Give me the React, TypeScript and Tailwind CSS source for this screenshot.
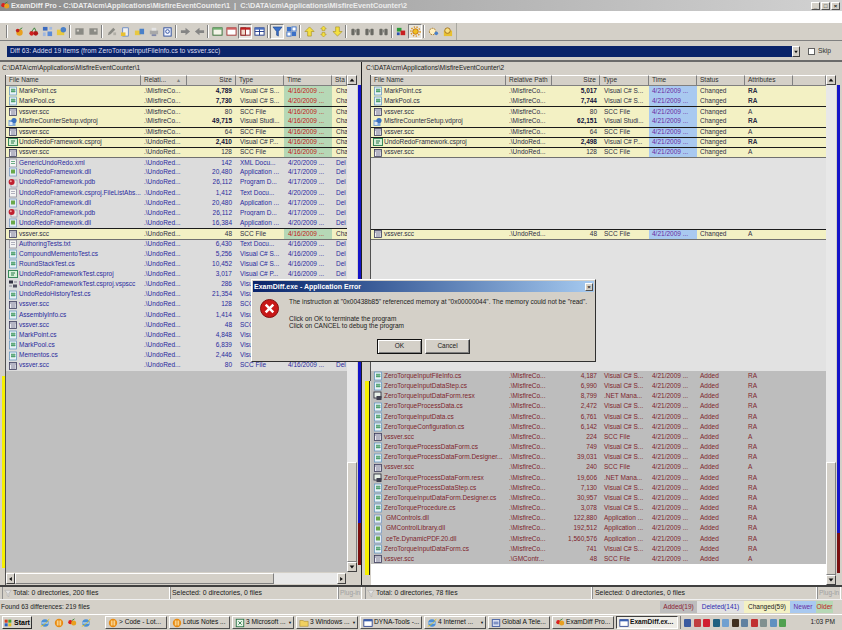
import React from "react"

type Row = {
  name: string
  icon: string
  rel: string
  size: string
  bold?: boolean
  type: string
  time: string
  status: string
  attr?: string
  line?: boolean
  softLine?: boolean
}

const misfire = ".\\MisfireCo..."
const undo = ".\\UndoRed..."
const csType = "Visual C# S..."
const appType = "Application ..."

const leftRows: Row[] = [
  { name: "MarkPoint.cs", icon: "cs", rel: misfire, size: "4,789", bold: true, type: csType, time: "4/16/2009 ...", status: "Cha" },
  { name: "MarkPool.cs", icon: "cs", rel: misfire, size: "7,730", bold: true, type: csType, time: "4/20/2009 ...", status: "Cha" },
  { name: "vssver.scc", icon: "scc", rel: misfire, size: "80", type: "SCC File", time: "4/16/2009 ...", status: "Cha", line: true },
  { name: "MisfireCounterSetup.vdproj", icon: "vd", rel: misfire, size: "49,715", bold: true, type: "Visual Studi...", time: "4/16/2009 ...", status: "Cha" },
  { name: "vssver.scc", icon: "scc", rel: misfire, size: "64", type: "SCC File", time: "4/16/2009 ...", status: "Cha", line: true },
  { name: "UndoRedoFramework.csproj", icon: "proj", rel: undo, size: "2,410", bold: true, type: "Visual C# P...", time: "4/16/2009 ...", status: "Cha", line: true },
  { name: "vssver.scc", icon: "scc", rel: undo, size: "128", type: "SCC File", time: "4/16/2009 ...", status: "Cha", line: true },
  { name: "GenericUndoRedo.xml", icon: "xml", rel: undo, size: "142", type: "XML Docu...", time: "4/20/2009 ...", status: "Del", softLine: true },
  { name: "UndoRedoFramework.dll", icon: "dll", rel: undo, size: "20,480", type: appType, time: "4/17/2009 ...", status: "Del" },
  { name: "UndoRedoFramework.pdb", icon: "pdb", rel: undo, size: "26,112", type: "Program D...", time: "4/17/2009 ...", status: "Del" },
  { name: "UndoRedoFramework.csproj.FileListAbs...", icon: "txt", rel: undo, size: "1,412", type: "Text Docu...", time: "4/20/2009 ...", status: "Del" },
  { name: "UndoRedoFramework.dll", icon: "dll", rel: undo, size: "20,480", type: appType, time: "4/17/2009 ...", status: "Del" },
  { name: "UndoRedoFramework.pdb", icon: "pdb", rel: undo, size: "26,112", type: "Program D...", time: "4/17/2009 ...", status: "Del" },
  { name: "UndoRedoFramework.dll", icon: "dll", rel: undo, size: "16,384", type: appType, time: "4/20/2009 ...", status: "Del" },
  { name: "vssver.scc", icon: "scc", rel: undo, size: "48", type: "SCC File", time: "4/16/2009 ...", status: "Cha", line: true },
  { name: "AuthoringTests.txt", icon: "txt", rel: undo, size: "6,430", type: "Text Docu...", time: "4/16/2009 ...", status: "Del", softLine: true },
  { name: "CompoundMementoTest.cs", icon: "cs", rel: undo, size: "5,256", type: csType, time: "4/16/2009 ...", status: "Del" },
  { name: "RoundStackTest.cs", icon: "cs", rel: undo, size: "10,452", type: csType, time: "4/16/2009 ...", status: "Del" },
  { name: "UndoRedoFrameworkTest.csproj", icon: "proj", rel: undo, size: "3,017", type: "Visual C# P...", time: "4/16/2009 ...", status: "Del" },
  { name: "UndoRedoFrameworkTest.csproj.vspscc", icon: "vsp", rel: undo, size: "286", type: "Visual Studi...", time: "4/16/2009 ...", status: "Del" },
  { name: "UndoRedoHistoryTest.cs", icon: "cs", rel: undo, size: "21,354", type: csType, time: "4/16/2009 ...", status: "Del" },
  { name: "vssver.scc", icon: "scc", rel: undo, size: "128", type: "SCC File", time: "4/16/2009 ...", status: "Del" },
  { name: "AssemblyInfo.cs", icon: "cs", rel: undo, size: "1,414", type: csType, time: "4/16/2009 ...", status: "Del" },
  { name: "vssver.scc", icon: "scc", rel: undo, size: "48", type: "SCC File", time: "4/16/2009 ...", status: "Del" },
  { name: "MarkPoint.cs", icon: "cs", rel: undo, size: "4,848", type: csType, time: "4/16/2009 ...", status: "Del" },
  { name: "MarkPool.cs", icon: "cs", rel: undo, size: "6,839", type: csType, time: "4/16/2009 ...", status: "Del" },
  { name: "Mementos.cs", icon: "cs", rel: undo, size: "2,446", type: csType, time: "4/16/2009 ...", status: "Del" },
  { name: "vssver.scc", icon: "scc", rel: undo, size: "80", type: "SCC File", time: "4/16/2009 ...", status: "Del" },
]

const changedTime = "4/21/2009 ..."
const rightChanged: Row[] = [
  { name: "MarkPoint.cs", icon: "cs", rel: misfire, size: "5,017", bold: true, type: csType, time: changedTime, status: "Changed", attr: "RA" },
  { name: "MarkPool.cs", icon: "cs", rel: misfire, size: "7,744", bold: true, type: csType, time: changedTime, status: "Changed", attr: "RA" },
  { name: "vssver.scc", icon: "scc", rel: misfire, size: "80", type: "SCC File", time: changedTime, status: "Changed", attr: "A", line: true },
  { name: "MisfireCounterSetup.vdproj", icon: "vd", rel: misfire, size: "62,151", bold: true, type: "Visual Studi...", time: changedTime, status: "Changed", attr: "RA" },
  { name: "vssver.scc", icon: "scc", rel: misfire, size: "64", type: "SCC File", time: changedTime, status: "Changed", attr: "A", line: true },
  { name: "UndoRedoFramework.csproj", icon: "proj", rel: undo, size: "2,498", bold: true, type: "Visual C# P...", time: changedTime, status: "Changed", attr: "RA", line: true },
  { name: "vssver.scc", icon: "scc", rel: undo, size: "128", type: "SCC File", time: changedTime, status: "Changed", attr: "A", line: true },
]

const rightLone: Row = { name: "vssver.scc", icon: "scc", rel: undo, size: "48", type: "SCC File", time: changedTime, status: "Changed", attr: "A", line: true }

const added = (name: string, icon: string, size: string, type: string, attr = "RA", rel = misfire): Row => ({
  name, icon, rel, size, type, time: changedTime, status: "Added", attr,
})

const rightAdded: Row[] = [
  added("ZeroTorqueInputFileInfo.cs", "cs", "4,187", csType),
  added("ZeroTorqueInputDataStep.cs", "cs", "6,990", csType),
  added("ZeroTorqueInputDataForm.resx", "resx", "8,799", ".NET Mana..."),
  added("ZeroTorqueProcessData.cs", "cs", "2,472", csType),
  added("ZeroTorqueInputData.cs", "cs", "6,761", csType),
  added("ZeroTorqueConfiguration.cs", "cs", "6,142", csType),
  added("vssver.scc", "scc", "224", "SCC File", "A"),
  added("ZeroTorqueProcessDataForm.cs", "cs", "749", csType),
  added("ZeroTorqueProcessDataForm.Designer...", "cs", "39,031", csType),
  added("vssver.scc", "scc", "240", "SCC File", "A"),
  added("ZeroTorqueProcessDataForm.resx", "resx", "19,606", ".NET Mana..."),
  added("ZeroTorqueProcessDataStep.cs", "cs", "7,130", csType),
  added("ZeroTorqueInputDataForm.Designer.cs", "cs", "30,957", csType),
  added("ZeroTorqueProcedure.cs", "cs", "3,078", csType),
  added("GMControls.dll", "dll", "122,880", appType),
  added("GMControlLibrary.dll", "dll", "192,512", appType),
  added("ceTe.DynamicPDF.20.dll", "dll", "1,560,576", appType),
  added("ZeroTorqueInputDataForm.cs", "cs", "741", csType),
  added("vssver.scc", "scc", "48", "SCC File", "A", ".\\GMContr..."),
]

function FileIcon({ kind }: { kind: string }) {
  const box = "w-[10px] h-[10px] shrink-0"
  if (kind === "scc")
    return (
      <svg viewBox="0 0 10 10" className={box}>
        <rect x="1.5" y="1.5" width="7" height="7" fill="#eeeef4" stroke="#3a3a5a" strokeWidth=".8" />
        <path d="M1.5 3h7M3 5h4.5M3 7h4.5" stroke="#4a4a6a" strokeWidth=".7" />
      </svg>
    )
  if (kind === "pdb")
    return (
      <svg viewBox="0 0 10 10" className={box}>
        <rect x="3" y="2" width="6" height="7" fill="#e8e8e8" stroke="#8888a0" strokeWidth=".6" />
        <circle cx="3.6" cy="4" r="3" fill="#c02030" />
        <circle cx="2.8" cy="3.2" r="1" fill="#f0a0a0" />
      </svg>
    )
  if (kind === "txt" || kind === "xml")
    return (
      <svg viewBox="0 0 10 10" className={box}>
        <rect x="1.5" y="1" width="7" height="8" fill="#f4f4f4" stroke="#8a8a9a" strokeWidth=".8" />
        <path d="M3 3.5h4M3 5.5h4" stroke={kind === "xml" ? "#4a9a6a" : "#a0a0b0"} strokeWidth=".8" />
      </svg>
    )
  if (kind === "vd")
    return (
      <svg viewBox="0 0 10 10" className={box}>
        <rect x="0.5" y="3" width="7" height="6" fill="#7fa8d8" />
        <circle cx="6" cy="3.5" r="2.6" fill="#3a70c0" />
        <rect x="1.5" y="5" width="3" height="3" fill="#e0e8f4" />
      </svg>
    )
  if (kind === "vsp")
    return (
      <svg viewBox="0 0 10 10" className={box}>
        <rect x="1" y="1.5" width="4" height="3" fill="#303040" />
        <rect x="5" y="5.5" width="4" height="3" fill="#505060" />
        <path d="M1 7h3M6 3h3" stroke="#808090" />
      </svg>
    )
  if (kind === "proj")
    return (
      <svg viewBox="0 0 10 10" className={box}>
        <rect x="0.5" y="1.5" width="9" height="7" fill="#d8f0d8" stroke="#3a8a5a" />
        <path d="M3 4h4M3 6h3" stroke="#2a7a4a" />
      </svg>
    )
  if (kind === "resx")
    return (
      <svg viewBox="0 0 10 10" className={box}>
        <rect x="1" y="1" width="7" height="6" fill="#e8f0e8" stroke="#202030" strokeWidth=".8" />
        <rect x="3.5" y="5" width="5" height="4" fill="#404050" />
      </svg>
    )
  if (kind === "dll")
    return (
      <svg viewBox="0 0 10 10" className={box}>
        <rect x="1.5" y="1" width="7" height="8" fill="#e4eef8" stroke="#7a9ac0" strokeWidth=".8" />
        <rect x="3" y="2.5" width="4" height="4" fill="#6aa84a" />
      </svg>
    )
  return (
    <svg viewBox="0 0 10 10" className={box}>
      <rect x="1.5" y="1" width="7" height="8" fill="#e8f2f8" stroke="#6a9ac0" strokeWidth=".8" />
      <path d="M4 2.5v4M6 2.5v4M3 3.8h4.5M3 5.4h4.5" stroke="#2f8f4f" strokeWidth=".8" />
    </svg>
  )
}

function Cell({ className, children }: { className: string; children?: React.ReactNode }) {
  return <div className={`shrink-0 overflow-hidden whitespace-nowrap ${className}`}>{children}</div>
}

function LeftRow({ r }: { r: Row }) {
  const changed = r.status === "Cha"
  const tone = changed ? "bg-[#f3f1c4] text-[#2e2e44]" : "bg-[#dcdcdc] text-[#2a2a9c]"
  const border = r.line ? "border-t border-[#1a1a1a]" : r.softLine ? "border-t border-[#707070]" : ""
  return (
    <div className={`flex items-center h-[10.185px] box-border ${tone} ${border}`}>
      <Cell className="w-[135px] flex items-center gap-[1px] pl-[2px]">
        <FileIcon kind={r.icon} />
        <span>{r.name}</span>
      </Cell>
      <Cell className="w-[46px] pl-[3px]">{r.rel}</Cell>
      <Cell className={`w-[49px] text-right pr-[4px] ${r.bold ? "font-bold text-[#10103a]" : ""}`}>{r.size}</Cell>
      <Cell className="w-[48px] pl-[4px]">{r.type}</Cell>
      <Cell className={`w-[48px] h-full pl-[4px] flex items-center ${changed ? "bg-[#b6d8b6] text-[#c02020]" : ""}`}>{r.time}</Cell>
      <Cell className="w-[15px] pl-[4px]">{r.status}</Cell>
    </div>
  )
}

function RightRow({ r }: { r: Row }) {
  const isAdded = r.status === "Added"
  const tone = isAdded ? "bg-[#bdbdbd] text-[#7d1f2c]" : "bg-[#f3f1c4] text-[#2e2e44]"
  return (
    <div className={`flex items-center h-[10.185px] box-border ${tone} ${r.line ? "border-t border-[#1a1a1a]" : ""}`}>
      <Cell className="w-[135px] flex items-center gap-[1px] pl-[2px]">
        <FileIcon kind={r.icon} />
        <span className={r.icon === "dll" ? "pl-[2px]" : ""}>{r.name}</span>
      </Cell>
      <Cell className="w-[46px] pl-[3px]">{r.rel}</Cell>
      <Cell className={`w-[48px] text-right pr-[3px] ${r.bold ? "font-bold text-[#10103a]" : ""}`}>{r.size}</Cell>
      <Cell className="w-[49px] pl-[4px]">{r.type}</Cell>
      <Cell className={`w-[48px] h-full pl-[3px] flex items-center ${isAdded ? "" : "bg-[#a9c9f0] text-[#6a2aa0]"}`}>{r.time}</Cell>
      <Cell className="w-[48px] pl-[3px]">{r.status}</Cell>
      <Cell className={`w-[48px] pl-[3px] ${r.bold ? "font-bold" : ""}`}>{r.attr}</Cell>
    </div>
  )
}

function HeaderCell({ w, label, align, sort }: { w: string; label?: string; align?: string; sort?: boolean }) {
  return (
    <div className={`${w} h-full shrink-0 flex items-center whitespace-nowrap overflow-hidden px-[3px] bg-[#d4d0c8] border-r border-b border-t border-r-[#808080] border-b-[#808080] border-t-white text-[#303030] ${align ?? ""}`}>
      <span>{label}</span>
      {sort && <span className="ml-[10px] text-[5px] text-[#808080]">▲</span>}
    </div>
  )
}

function Arrow({ dir, className }: { dir: "up" | "down" | "left" | "right"; className?: string }) {
  const pts = { up: "5,3 2,7 8,7", down: "2,3 8,3 5,7", left: "7,2 7,8 3,5", right: "3,2 3,8 7,5" }[dir]
  return (
    <div className={`shrink-0 bg-[#d4d0c8] border border-t-white border-l-white border-r-[#404040] border-b-[#404040] flex items-center justify-center ${className ?? ""}`}>
      <svg viewBox="0 0 10 10" className="w-[8px] h-[8px]">
        <polygon points={pts} fill="#101010" />
      </svg>
    </div>
  )
}

function VScroll({ thumb }: { thumb: string }) {
  return (
    <div className="w-[10px] shrink-0 flex flex-col h-full">
      <Arrow dir="up" className="h-[10px]" />
      <div className="flex-1 bg-[#e8e8e8]" />
      <div className={`${thumb} shrink-0 bg-[#d4d0c8] border border-t-white border-l-white border-r-[#808080] border-b-[#808080]`} />
      <Arrow dir="down" className="h-[10px]" />
    </div>
  )
}

function Overview({ red, tail }: { red: string; tail: string }) {
  return (
    <div className="w-[3px] shrink-0 flex flex-col pt-[10px] h-full">
      <div className="flex-1 bg-[#1414c8]" />
      <div className={`${red} shrink-0 bg-[#7a1010]`} />
      <div className={`${tail} shrink-0`} />
    </div>
  )
}

function StatusField({ w, children, grey }: { w: string; children?: React.ReactNode; grey?: boolean }) {
  return (
    <div className={`${w} shrink-0 h-full flex items-center whitespace-nowrap overflow-hidden border-r border-r-white border-l border-l-[#909090] ${grey ? "text-[#a0a0a0]" : "text-[#202020]"}`}>
      {children}
    </div>
  )
}

function Funnel() {
  return (
    <svg viewBox="0 0 10 10" className="w-[8px] h-[9px] mx-[1px] shrink-0">
      <path d="M1 1h8L6 5v4L4 8V5z" fill="#e4e4e4" stroke="#a0a0a0" strokeWidth=".6" />
    </svg>
  )
}

function Sep() {
  return <div className="w-[2px] h-[13px] shrink-0 mx-[1px] border-l border-l-[#808080] border-r border-r-white" />
}

function Tool({ kind, active }: { kind: string; active?: boolean }) {
  const art: Record<string, React.ReactNode> = {
    fruit: <><circle cx="6" cy="7" r="3.5" fill="#e8a020" /><circle cx="4" cy="5" r="2" fill="#c02020" /><path d="M6 4l3-2" stroke="#308030" /></>,
    cherry: <><circle cx="4" cy="8" r="2.5" fill="#d02020" /><circle cx="8.5" cy="8" r="2.5" fill="#b01818" /><path d="M4 6l3-4 2 4" stroke="#308030" fill="none" /></>,
    blocks: <><rect x="1" y="1" width="5" height="4" fill="#3a6ac0" /><rect x="6" y="6" width="5" height="5" fill="#5a8ad8" /><rect x="1" y="7" width="3" height="4" fill="#a0b8e0" /><rect x="8" y="1" width="3" height="3" fill="#a0b8e0" /></>,
    folderGear: <><rect x="1" y="4" width="8" height="6" fill="#e8c840" /><circle cx="8" cy="4" r="3" fill="#4a80c8" /></>,
    grey1: <><rect x="1.5" y="2.5" width="9" height="7" fill="#8a8a84" /><rect x="3" y="4" width="2.5" height="2" fill="#d4d0c8" /></>,
    grey2: <><rect x="1.5" y="2.5" width="9" height="7" fill="#8a8a84" /><rect x="6.5" y="4" width="2.5" height="2" fill="#d4d0c8" /></>,
    pencil: <><path d="M2 10l1-3 5-5 2 2-5 5z" fill="#8a8a84" /><rect x="8" y="7" width="3" height="3" fill="#b0aea6" /></>,
    yellowDoc: <><rect x="3" y="2" width="6" height="9" fill="#f0f0f0" stroke="#3a6ac0" strokeWidth=".7" /><rect x="1" y="7" width="5" height="4" fill="#e8c030" /></>,
    folders: <><rect x="1" y="5" width="6" height="5" fill="#e8c840" /><rect x="6" y="3" width="5" height="6" fill="#4a80c8" /></>,
    print: <><rect x="2" y="5" width="9" height="4" fill="#a8a8a8" /><rect x="4" y="2" width="5" height="3" fill="#e4e4e4" /><rect x="4" y="9" width="5" height="2" fill="#8088a8" /></>,
    bluePage: <><rect x="2" y="2" width="8" height="9" fill="#f0f4ff" stroke="#2a4a9a" /><circle cx="6" cy="6" r="2" fill="none" stroke="#2a4a9a" /></>,
    right: <path d="M1 4.5h5V2l5 4-5 4V7.5H1z" fill="#848484" />,
    left: <path d="M11 4.5H6V2L1 6l5 4V7.5h5z" fill="#848484" />,
    win1: <><rect x="1" y="2" width="10" height="8" fill="#f4f4e8" stroke="#306a30" /><rect x="1" y="2" width="10" height="2" fill="#70b070" /></>,
    win2: <><rect x="1" y="2" width="10" height="8" fill="#fff" stroke="#a03030" /><rect x="1" y="2" width="10" height="2" fill="#d06060" /></>,
    win3: <><rect x="1" y="2" width="10" height="8" fill="#fff" stroke="#902020" /><rect x="1" y="2" width="5" height="8" fill="#f0d8c8" stroke="#902020" /><rect x="1" y="2" width="10" height="2" fill="#c02020" /></>,
    win4: <><rect x="1" y="2" width="10" height="8" fill="#fff" stroke="#203a8a" /><path d="M6 2v8M1 6h10" stroke="#203a8a" /><rect x="1" y="2" width="10" height="2" fill="#4a70c0" /></>,
    funnel: <path d="M1 1h10L7 6v5L5 10V6z" fill="#3a70c8" stroke="#183a80" strokeWidth=".6" />,
    grid: <><rect x="1" y="1" width="4.5" height="4.5" fill="#3a70c8" /><rect x="6.5" y="1" width="4.5" height="4.5" fill="#fff" stroke="#3a70c8" /><rect x="1" y="6.5" width="4.5" height="4.5" fill="#fff" stroke="#3a70c8" /><rect x="6.5" y="6.5" width="4.5" height="4.5" fill="#3a70c8" /></>,
    up: <path d="M6 1l5 5H8v5H4V6H1z" fill="#f4e040" stroke="#a89020" strokeWidth=".7" />,
    both: <path d="M6 0l3 3H7.5v2h-3V3H3zM6 12l3-3H7.5V7h-3v2H3z" fill="#f4e040" stroke="#a89020" strokeWidth=".6" />,
    down: <path d="M6 11l5-5H8V1H4v5H1z" fill="#f4e040" stroke="#a89020" strokeWidth=".7" />,
    bino: <><rect x="1.5" y="3" width="3.5" height="7" rx="1" fill="#6a6a64" /><rect x="7" y="3" width="3.5" height="7" rx="1" fill="#6a6a64" /><rect x="5" y="4" width="2" height="3" fill="#8a8a84" /></>,
    colors: <><rect x="1" y="2" width="5" height="4" fill="#2a9a3a" /><rect x="5" y="5" width="5" height="5" fill="#c82020" /><rect x="1" y="7" width="3" height="3" fill="#2a50b0" /></>,
    sun: <><circle cx="6" cy="6" r="3" fill="#f0c020" stroke="#c07010" /><circle cx="6" cy="6" r="5" fill="none" stroke="#d89020" strokeDasharray="1.5 1.5" strokeWidth="1.5" /></>,
    gear: <><circle cx="5" cy="6" r="3.5" fill="#fff0c0" stroke="#a07020" strokeDasharray="2 1" /><circle cx="9" cy="8" r="2" fill="#4a80c8" /></>,
    gearY: <><rect x="2" y="5" width="9" height="6" fill="#e8c030" /><circle cx="6" cy="5" r="3" fill="#f8e080" stroke="#a07020" /></>,
  }
  return (
    <div className={`w-[14px] h-[15px] shrink-0 flex items-center justify-center ${active ? "border border-t-[#808080] border-l-[#808080] border-r-white border-b-white bg-[#e8e6e0]" : ""}`}>
      <svg viewBox="0 0 12 12" className="w-[11px] h-[11px]">{art[kind]}</svg>
    </div>
  )
}

function TaskIcon({ kind }: { kind: string }) {
  const art: Record<string, React.ReactNode> = {
    lotus: <><circle cx="6" cy="6" r="5" fill="#e88a10" /><path d="M4 3v6M6 3v6M8 3v6" stroke="#fff0c0" /></>,
    excel: <><rect x="1.5" y="1.5" width="9" height="9" fill="#e8f4e8" stroke="#207040" /><path d="M4 4l4 4M8 4l-4 4" stroke="#207040" /></>,
    folder: <><path d="M1 3h4l1 1h5v6H1z" fill="#f0d060" stroke="#a08020" strokeWidth=".6" /></>,
    win: <><rect x="1" y="2" width="10" height="8" fill="#fff" stroke="#203a8a" /><rect x="1" y="2" width="10" height="2" fill="#3a60b0" /></>,
    ie: <><circle cx="6" cy="6" r="4.5" fill="#4a90d8" /><path d="M2 6h8" stroke="#fff" /><path d="M1 10C4 9 9 5 11 1" stroke="#e0c020" fill="none" /></>,
    word: <><rect x="1.5" y="2" width="9" height="8" fill="#e8ecf8" stroke="#2a4a9a" /><path d="M3 5h6M3 7h6" stroke="#2a4a9a" /></>,
    exam: <><circle cx="4" cy="5" r="2.5" fill="#d82020" /><circle cx="8" cy="6" r="3" fill="#e8a020" /><path d="M6 3l3-2" stroke="#308030" /></>,
  }
  return <svg viewBox="0 0 12 12" className="w-[10px] h-[10px] shrink-0">{art[kind]}</svg>
}

function TaskButton({ w, icon, label, menu, pressed }: { w: string; icon: string; label: string; menu?: boolean; pressed?: boolean }) {
  return (
    <div className={`${w} h-[13px] shrink-0 flex items-center gap-[1px] pl-[2px] overflow-hidden whitespace-nowrap text-[#101010] ${pressed ? "bg-[#eeece6] font-bold border border-t-[#404040] border-l-[#404040] border-r-white border-b-white" : "bg-[#d4d0c8] border border-t-white border-l-white border-r-[#505050] border-b-[#505050]"}`}>
      <TaskIcon kind={icon} />
      <span className="flex-1">{label}</span>
      {menu && <span className="text-[4px] pr-[1px]">▼</span>}
    </div>
  )
}

const trayColors = ["#3a5aa0", "#c04040", "#d02030", "#206080", "#70a0d0", "#403020", "#6080a0", "#c03030", "#809090", "#6090c0", "#50a050"]

export default function App() {
  return (
    <div className="w-[842px] h-[630px] relative overflow-hidden flex flex-col bg-[#d4d0c8] font-['Liberation_Sans',sans-serif] text-[6.5px] leading-none">
      {/* title bar */}
      <div className="h-[11px] shrink-0 flex items-center whitespace-nowrap bg-gradient-to-r from-[#8c8c8c] to-[#d2d2d2] text-[#ececec] font-bold text-[7.3px]">
        <TaskIcon kind="exam" />
        <span className="ml-[1px]">ExamDiff Pro - C:\DATA\cm\Applications\MisfireEventCounter\1&nbsp; |&nbsp; C:\DATA\cm\Applications\MisfireEventCounter\2</span>
        <div className="ml-auto flex gap-[1px] pr-[2px]">
          {["_", "□", "×"].map((c) => (
            <div key={c} className="w-[9px] h-[8px] bg-[#d4d0c8] border border-t-white border-l-white border-r-[#505050] border-b-[#505050] text-[#202020] flex items-center justify-center text-[6px]">{c}</div>
          ))}
        </div>
      </div>
      {/* menu band */}
      <div className="h-[12px] shrink-0 bg-white" />
      {/* toolbar */}
      <div className="h-[18px] shrink-0 border-b border-b-[#808080] flex items-center pl-[5px]">
        <div className="w-[452px] flex items-center border-r border-r-[#a8a8a0] h-full">
          <Sep />
          <div className="w-[3px]" />
          <Tool kind="fruit" /><Tool kind="cherry" /><Tool kind="blocks" /><Tool kind="folderGear" />
          <Sep />
          <Tool kind="grey1" /><Tool kind="grey2" />
          <Sep />
          <Tool kind="pencil" /><Tool kind="yellowDoc" /><Tool kind="folders" /><Tool kind="print" /><Tool kind="bluePage" />
          <Sep />
          <Tool kind="right" /><Tool kind="left" />
          <Sep />
          <Tool kind="win1" /><Tool kind="win2" /><Tool kind="win3" active /><Tool kind="win4" />
          <Sep />
          <Tool kind="funnel" active /><Tool kind="grid" />
          <Sep />
          <Tool kind="up" /><Tool kind="both" /><Tool kind="down" />
          <Sep />
          <Tool kind="bino" /><Tool kind="bino" /><Tool kind="bino" />
          <Sep />
          <Tool kind="colors" /><Tool kind="sun" active /><Sep /><Tool kind="gear" /><Tool kind="gearY" />
        </div>
      </div>
      {/* diff selector */}
      <div className="h-[21px] shrink-0 flex items-center pl-[7px] pt-[2px] border-b-2 border-b-[#6a6a6a] text-[6.7px]">
        <div className="w-[793px] h-[11px] shrink-0 bg-[#0a246a] text-[#dcdcf0] flex items-center pl-[3px] relative">
          Diff 63: Added 19 items (from ZeroTorqueInputFileInfo.cs to vssver.scc)
          <Arrow dir="down" className="absolute right-0 top-0 h-[11px] w-[8px]" />
        </div>
        <div className="w-[7px] h-[7px] ml-[8px] shrink-0 bg-white border border-[#606060]" />
        <span className="ml-[3px] text-[#303030]">Skip</span>
      </div>
      {/* panes */}
      <div className="flex-1 flex min-h-0">
        {/* left pane */}
        <div className="w-[362px] shrink-0 flex flex-col border-r border-r-[#202020]">
          <div className="h-[13px] shrink-0 flex items-center pl-[2px] text-[#202020]">C:\DATA\cm\Applications\MisfireEventCounter\1</div>
          <div className="flex-1 flex min-h-0">
            <div className="w-[6px] shrink-0 flex flex-col border-r border-r-[#505050] pl-[2px]">
              <div className="h-[301px] shrink-0" />
              <div className="h-[192px] shrink-0 bg-[#f6f000]" />
            </div>
            <div className="w-[350px] shrink-0 flex flex-col">
              <div className="flex-1 flex min-h-0">
                <div className="w-[341px] shrink-0 flex flex-col">
                  <div className="h-[11px] shrink-0 flex">
                    <HeaderCell w="w-[135px]" label="File Name" />
                    <HeaderCell w="w-[46px]" label="Relati..." sort />
                    <HeaderCell w="w-[49px]" label="Size" align="justify-end" />
                    <HeaderCell w="w-[48px]" label="Type" />
                    <HeaderCell w="w-[48px]" label="Time" />
                    <HeaderCell w="w-[15px]" label="Sta" />
                  </div>
                  {leftRows.map((r, i) => (
                    <LeftRow key={i} r={r} />
                  ))}
                  <div className="flex-1 bg-[#bfbfbf]" />
                </div>
                <VScroll thumb="h-[100px]" />
              </div>
              <div className="h-[13px] shrink-0 flex items-center">
                <Arrow dir="left" className="w-[9px] h-[11px]" />
                <div className="w-[259px] h-[11px] shrink-0 bg-[#d4d0c8] border border-t-white border-l-white border-r-[#808080] border-b-[#808080]" />
                <div className="flex-1 h-[11px] bg-[#e8e8e8]" />
                <Arrow dir="right" className="w-[9px] h-[11px]" />
                <div className="w-[10px] h-[11px] shrink-0" />
              </div>
            </div>
            <div className="ml-[2px] h-full">
              <Overview red="h-[42px]" tail="h-[20px]" />
            </div>
          </div>
        </div>
        {/* right pane */}
        <div className="ml-[3px] flex-1 flex flex-col min-w-0">
          <div className="h-[13px] shrink-0 flex items-center pl-[1px] text-[#202020]">C:\DATA\cm\Applications\MisfireEventCounter\2</div>
          <div className="flex-1 flex min-h-0">
            <div className="w-[6px] shrink-0 flex flex-col">
              <div className="h-[306px] shrink-0 border-r border-r-[#505050]" />
              <div className="h-[194px] shrink-0 w-[5px] bg-[#f6f000] border-r border-r-[#202020]" />
            </div>
            <div className="w-[455px] shrink-0 flex flex-col">
              <div className="h-[11px] shrink-0 flex">
                <HeaderCell w="w-[135px]" label="File Name" />
                <HeaderCell w="w-[46px]" label="Relative Path" />
                <HeaderCell w="w-[48px]" label="Size" align="justify-end" />
                <HeaderCell w="w-[49px]" label="Type" />
                <HeaderCell w="w-[48px]" label="Time" />
                <HeaderCell w="w-[48px]" label="Status" />
                <HeaderCell w="w-[48px]" label="Attributes" />
                <HeaderCell w="w-[33px]" />
              </div>
              {rightChanged.map((r, i) => (
                <RightRow key={i} r={r} />
              ))}
              <div className="h-[71.3px] shrink-0 bg-[#e2e2e2] border-t border-t-[#707070]" />
              <RightRow r={rightLone} />
              <div className="h-[132.4px] shrink-0 bg-[#e2e2e2] border-t border-t-[#707070]" />
              {rightAdded.map((r, i) => (
                <RightRow key={i} r={r} />
              ))}
              <div className="flex-1 bg-white" />
            </div>
            <VScroll thumb="h-[113px]" />
            <div className="ml-[1px] h-full">
              <Overview red="h-[40px]" tail="h-[12px]" />
            </div>
          </div>
        </div>
      </div>
      {/* pane status */}
      <div className="h-[14px] shrink-0 flex items-center border-t-2 border-t-[#404040] text-[6.9px]">
        <div className="w-[2px] shrink-0" />
        <StatusField w="w-[168px]"><Funnel />Total: 0 directories, 200 files</StatusField>
        <StatusField w="w-[168px]"><span className="pl-[1px]">Selected: 0 directories, 0 files</span></StatusField>
        <StatusField w="w-[24px]" grey><span className="pl-[1px] text-[6.5px]">Plug-in</span></StatusField>
        <div className="w-[3px] shrink-0" />
        <StatusField w="w-[227px]"><Funnel />Total: 0 directories, 78 files</StatusField>
        <StatusField w="w-[225px]"><span className="pl-[2px]">Selected: 0 directories, 0 files</span></StatusField>
        <StatusField w="w-[24px]" grey><span className="pl-[1px] text-[6.5px]">Plug-in</span></StatusField>
      </div>
      {/* bottom status */}
      <div className="h-[15px] shrink-0 flex items-center border-t border-t-[#f0f0f0] pl-[1px] text-[#202020] text-[6.5px]">
        Found 63 differences: 219 files
        <div className="ml-auto flex items-center h-[12px] pr-[9px] whitespace-nowrap">
          <div className="w-[37px] h-full flex items-center justify-center bg-[#bdbdbd] text-[#8a2030]">Added(19)</div>
          <div className="w-[47px] h-full flex items-center justify-center bg-[#e2e2e2] text-[#2a2ab0]">Deleted(141)</div>
          <div className="w-[46px] h-full flex items-center justify-center bg-[#f3f1c4] text-[#202020]">Changed(59)</div>
          <div className="w-[26px] h-full flex items-center justify-center bg-[#a9c9f0] text-[#6a2aa0]">Newer</div>
          <div className="w-[17px] h-full flex items-center justify-center bg-[#b6d8b6] text-[#c02020]">Older</div>
        </div>
      </div>
      {/* taskbar */}
      <div className="h-[16px] shrink-0 flex items-center gap-[2px] border-t border-t-white text-[6.6px]">
        <div className="w-[30px] h-[13px] shrink-0 ml-[2px] flex items-center gap-[2px] pl-[1px] font-bold text-[7px] bg-[#d4d0c8] border border-t-white border-l-white border-r-[#303030] border-b-[#303030] text-black">
          <svg viewBox="0 0 12 12" className="w-[8px] h-[8px] shrink-0">
            <rect x="1" y="1" width="4.5" height="4.5" fill="#d84020" /><rect x="6.5" y="1" width="4.5" height="4.5" fill="#40a030" /><rect x="1" y="6.5" width="4.5" height="4.5" fill="#3060c0" /><rect x="6.5" y="6.5" width="4.5" height="4.5" fill="#e8c020" />
          </svg>
          Start
        </div>
        <div className="w-[69px] shrink-0 flex items-center gap-[3.5px] pl-[6px]">
          <TaskIcon kind="ie" /><TaskIcon kind="lotus" /><TaskIcon kind="exam" /><TaskIcon kind="ie" />
        </div>
        <TaskButton w="w-[62px]" icon="lotus" label="> Code - Lot..." />
        <TaskButton w="w-[61px]" icon="lotus" label="Lotus Notes ..." />
        <TaskButton w="w-[62px]" icon="excel" label="3 Microsoft ..." menu />
        <TaskButton w="w-[62px]" icon="folder" label="3 Windows ..." menu />
        <TaskButton w="w-[62px]" icon="win" label="DYNA-Tools -..." />
        <TaskButton w="w-[62px]" icon="ie" label="4 Internet ..." menu />
        <TaskButton w="w-[62px]" icon="word" label="Global A Tele..." />
        <TaskButton w="w-[62px]" icon="exam" label="ExamDiff Pro..." />
        <TaskButton w="w-[62px]" icon="win" label="ExamDiff.ex..." pressed />
        <div className="flex-1 h-[13px] flex items-center gap-[2.5px] pl-[3px] border-l border-l-[#808080]">
          {trayColors.map((c, i) => (
            <span key={i} className="w-[7px] h-[8px] shrink-0 rounded-[1px]" style={{ backgroundColor: c }} />
          ))}
          <span className="ml-auto pr-[7px] text-[#202020]">1:03 PM</span>
        </div>
      </div>
      {/* error dialog */}
      <div className="absolute left-[251px] top-[279px] w-[345px] h-[83px] flex flex-col bg-[#d4d0c8] border border-t-white border-l-white border-r-[#303030] border-b-[#303030] p-[1px] text-[#202020]">
        <div className="h-[11px] shrink-0 flex items-center pl-[1px] bg-gradient-to-r from-[#0a246a] to-[#a6caf0] text-white font-bold text-[7px]">
          ExamDiff.exe - Application Error
          <div className="ml-auto mr-[1px] w-[8px] h-[8px] bg-[#d4d0c8] border border-t-white border-l-white border-r-[#505050] border-b-[#505050] text-[#202020] flex items-center justify-center text-[6px]">×</div>
        </div>
        <div className="flex-1 flex pl-[7px] pt-[7px] min-h-0">
          <svg viewBox="0 0 20 20" className="w-[19px] h-[19px] shrink-0">
            <circle cx="10" cy="10" r="9.5" fill="#c81818" stroke="#801010" />
            <path d="M6 6l8 8M14 6l-8 8" stroke="#fff" strokeWidth="2.6" />
          </svg>
          <div className="ml-[10px] flex flex-col whitespace-nowrap">
            <div>The instruction at "0x00438b85" referenced memory at "0x00000044". The memory could not be "read".</div>
            <div className="mt-[10px]">Click on OK to terminate the program</div>
            <div className="mt-[1px]">Click on CANCEL to debug the program</div>
          </div>
        </div>
        <div className="h-[15px] shrink-0 flex justify-center gap-[3px] mb-[6px]">
          <div className="w-[45px] h-full flex items-center justify-center border border-[#101010] shadow-[inset_1px_1px_0_#fff,inset_-1px_-1px_0_#808080]">OK</div>
          <div className="w-[45px] h-full flex items-center justify-center border border-t-white border-l-white border-r-[#303030] border-b-[#303030] shadow-[inset_-1px_-1px_0_#808080]">Cancel</div>
        </div>
      </div>
    </div>
  )
}
